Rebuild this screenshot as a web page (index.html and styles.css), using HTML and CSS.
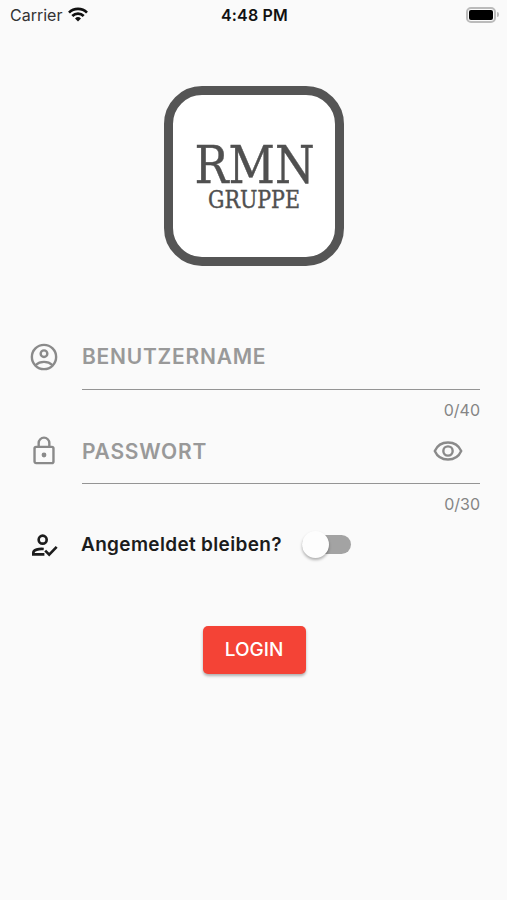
FILE: index.html
```html
<!DOCTYPE html>
<html lang="de">
<head>
    <meta charset="UTF-8">
    <meta name="viewport" content="width=device-width, initial-scale=1.0">
    <title>RMN Gruppe Login</title>
    <link rel="stylesheet" href="styles.css">
</head>
<body>
    <div class="status-bar">
        <div class="carrier">
            <span>Carrier</span>
            <svg width="20" height="15" viewBox="0 0 20 15" fill="none" stroke="#111" stroke-width="2.7">
                <path d="M1 5.6a12.8 12.8 0 0 1 18 0"/>
                <path d="M4.3 9a8.1 8.1 0 0 1 11.4 0"/>
                <path d="M10 14.5l-3-3a4.3 4.3 0 0 1 6 0z" fill="#111" stroke="none"/>
            </svg>
        </div>
        <div class="time">4:48 PM</div>
        <div class="battery">
            <div class="battery-body"></div>
            <div class="battery-tip"></div>
        </div>
    </div>

    <div class="logo">
        <svg width="162" height="162" viewBox="0 0 162 162">
            <text class="logo-name" x="21.5" y="88" textLength="120" lengthAdjust="spacingAndGlyphs">RMN</text>
            <text class="logo-sub" x="35" y="113" textLength="92" lengthAdjust="spacingAndGlyphs">GRUPPE</text>
        </svg>
    </div>

    <form class="login-form">
        <div class="field">
            <svg class="icon" viewBox="0 0 24 24">
                <circle cx="12" cy="12" r="9.1"/>
                <circle cx="12" cy="9.5" r="2.5"/>
                <path d="M5.8 18c3.2-3.1 9.2-3.1 12.4 0"/>
            </svg>
            <div class="field-body">
                <div class="field-input">
                    <label>BENUTZERNAME</label>
                </div>
                <div class="counter">0/40</div>
            </div>
        </div>
        <div class="field">
            <svg class="icon" viewBox="0 0 24 24">
                <rect x="4.9" y="8.9" width="14.2" height="12.2" rx="1.2"/>
                <path d="M8 9V6a4 4 0 0 1 8 0v3"/>
                <circle class="dot" cx="12" cy="15" r="1.8"/>
            </svg>
            <div class="field-body">
                <div class="field-input">
                    <label>PASSWORT</label>
                    <svg class="icon" viewBox="0 0 24 24">
                        <path d="M2.1 12C5.8 3.5 18.2 3.5 21.9 12 18.2 20.5 5.8 20.5 2.1 12z"/>
                        <circle cx="12" cy="12" r="3.5"/>
                    </svg>
                </div>
                <div class="counter">0/30</div>
            </div>
        </div>
        <div class="remember">
            <svg class="icon icon-dark" viewBox="0 0 24 24">
                <circle cx="11" cy="8" r="3"/>
                <path d="M12.3 19H4v-1.2C4 15.7 8 14.6 11.8 15"/>
                <path d="M12.9 16.2l3 3 5.6-5.8"/>
            </svg>
            <span class="remember-text">Angemeldet bleiben?</span>
            <div class="switch">
                <div class="knob"></div>
            </div>
        </div>
        <button type="button" class="login-btn">LOGIN</button>
    </form>
</body>
</html>
```
FILE: styles.css
```css
body {
    margin: 0;
    height: 900px;
    overflow: hidden;
    background-color: #fafafa;
    color: #1c1c1c;
    font-family: Inter, "Liberation Sans", sans-serif;
}
.status-bar {
    display: grid;
    grid-template-columns: 1fr auto 1fr;
    align-items: center;
    height: 29px;
    padding: 0 8px 0 10px;
    font-size: 16px;
}
.carrier {
    display: flex;
    align-items: center;
    gap: 6px;
    color: #333;
}
.time {
    font-weight: 600;
    letter-spacing: 0.2px;
    color: #111;
}
.battery {
    display: flex;
    align-items: center;
    justify-content: flex-end;
    gap: 1px;
}
.battery-body {
    box-sizing: border-box;
    width: 30px;
    height: 16px;
    border: 2px solid #bbb;
    border-radius: 5px;
    padding: 1px;
    background-color: #000;
    background-clip: content-box;
}
.battery-tip {
    width: 2px;
    height: 5px;
    border-radius: 0 2px 2px 0;
    background-color: #bbb;
}
.logo {
    width: 162px;
    height: 162px;
    margin: 56.5px auto 0;
    border: 9px solid #555;
    border-radius: 38px;
    background-color: #fff;
}
.logo svg {
    display: block;
}
.logo text {
    font-family: "DejaVu Serif Condensed", "DejaVu Serif", serif;
    fill: #505050;
    stroke: #505050;
    stroke-width: 0.4;
}
.logo-name {
    font-size: 53px;
}
.logo-sub {
    font-size: 25px;
}
.login-form {
    padding: 59px 27px 0 28px;
}
.icon {
    flex: none;
    width: 32px;
    height: 32px;
    fill: none;
    stroke: #8a8a8a;
    stroke-width: 1.8;
}
.icon .dot {
    fill: #8a8a8a;
    stroke: none;
}
.icon-dark {
    stroke: #1c1c1c;
    stroke-width: 2;
}
.field {
    display: flex;
    align-items: flex-start;
    gap: 22px;
    height: 94.5px;
}
.field > .icon {
    margin-top: 16px;
}
.field-body {
    flex: 1;
}
.field-input {
    box-sizing: border-box;
    display: flex;
    align-items: center;
    justify-content: space-between;
    height: 65px;
    padding-right: 16px;
    border-bottom: 1px solid #949494;
    color: #999;
    font-size: 21px;
    font-weight: 600;
    letter-spacing: 0.75px;
}
.counter {
    margin-top: 10px;
    text-align: right;
    font-size: 16px;
    line-height: 20px;
    color: #858585;
}
.remember {
    display: flex;
    align-items: center;
    height: 62px;
}
.remember-text {
    width: 221px;
    margin-left: 21px;
    font-size: 19px;
    font-weight: 600;
    letter-spacing: 0.33px;
}
.switch {
    display: flex;
    align-items: center;
    width: 49px;
    height: 19px;
    border-radius: 10px;
    background-color: #a3a3a3;
}
.knob {
    width: 27px;
    height: 27px;
    border-radius: 50%;
    background-color: #fdfdfd;
    box-shadow: 0 2px 3px rgba(0, 0, 0, 0.3);
}
.login-btn {
    display: block;
    width: 103px;
    height: 48px;
    margin: 50px auto 0;
    padding: 0;
    border: none;
    border-radius: 5px;
    background-color: #f44336;
    box-shadow: 0 2px 3px rgba(0, 0, 0, 0.3);
    color: #fff;
    font-family: inherit;
    font-size: 19px;
    font-weight: 500;
}
```
